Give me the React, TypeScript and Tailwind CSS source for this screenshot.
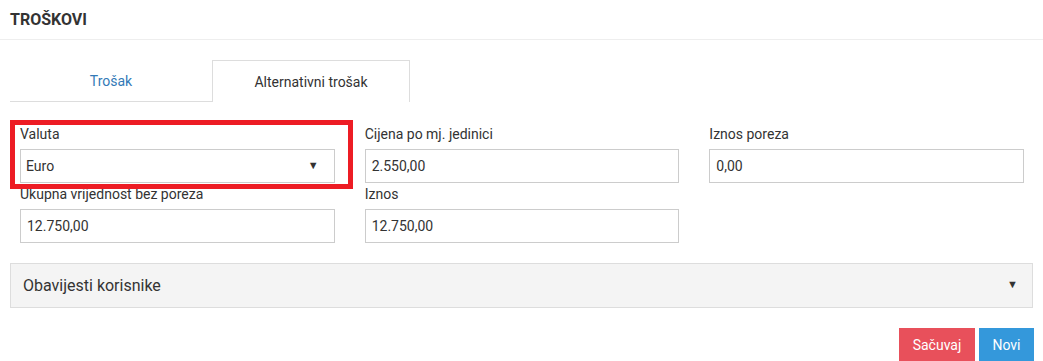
import React from 'react';

const font = { fontFamily: 'Roboto, "Liberation Sans", Arial, sans-serif' };

const fieldsRow1 = [
  { label: 'Cijena po mj. jedinici', value: '2.550,00' },
  { label: 'Iznos poreza', value: '0,00' },
];

function Field({ label, value }: { label: string; value: string }) {
  return (
    <div className="flex flex-col">
      <label className="h-[19px] mb-[5px] text-[14px] leading-[19px] text-[#333]">{label}</label>
      <div className="h-[34px] border border-[#ccc] bg-white px-[6px] flex items-center text-[14px] text-[#333]">
        {value}
      </div>
    </div>
  );
}

export default function App() {
  return (
    <div className="w-[1043px] h-[361px] bg-white overflow-hidden" style={font}>
      {/* Header */}
      <div className="h-[40px] border-b border-[#eee] px-[10px] flex items-center">
        <h3 className="text-[16px] font-bold text-[#333]">TROŠKOVI</h3>
      </div>

      {/* Tabs */}
      <div className="px-[10px] pt-[20px] flex">
        <div className="w-[202px] h-[42px] border-b border-[#ddd] flex items-center justify-center pt-[2px] text-[14px] text-[#337ab7]">
          Trošak
        </div>
        <div className="w-[198px] h-[42px] border border-b-0 border-[#ddd] flex items-center justify-center pt-[2px] text-[14px] text-[#333]">
          Alternativni trošak
        </div>
      </div>

      {/* Form */}
      <div className="relative px-[20px] pt-[23px]">
        <div className="grid grid-cols-3 gap-x-[30px] w-[1004px]">
          <div className="relative">
            <Field label="Valuta" value="" />
            <div className="absolute left-0 right-0 top-[24px] h-[34px] px-[6px] flex items-center justify-between text-[14px] text-[#333]">
              <span>Euro</span>
              <span className="text-[11px] mr-[10px]">▼</span>
            </div>
          </div>
          {fieldsRow1.map((f) => (
            <Field key={f.label} label={f.label} value={f.value} />
          ))}
        </div>
        <div className="grid grid-cols-3 gap-x-[30px] w-[1004px] mt-[2px]">
          <Field label="Ukupna vrijednost bez poreza" value="12.750,00" />
          <Field label="Iznos" value="12.750,00" />
        </div>

        {/* annotation highlight */}
        <div className="absolute left-[10px] top-[18px] w-[343px] h-[69px] border-[5px] border-[#ed1c24] pointer-events-none" />
      </div>

      {/* Collapsible panel */}
      <div className="mx-[10px] mt-[20px] h-[45px] border border-[#ddd] bg-[#f4f4f4] flex items-center justify-between pl-[12px] pr-[14px]">
        <span className="text-[16px] text-[#333]">Obavijesti korisnike</span>
        <span className="text-[11px] text-[#333]">▼</span>
      </div>

      {/* Buttons */}
      <div className="flex justify-end gap-[4px] px-[9px] mt-[20px]">
        <button className="w-[76px] h-[34px] bg-[#e8505b] text-white text-[14px]">Sačuvaj</button>
        <button className="w-[55px] h-[34px] bg-[#3498db] text-white text-[14px]">Novi</button>
      </div>
    </div>
  );
}
